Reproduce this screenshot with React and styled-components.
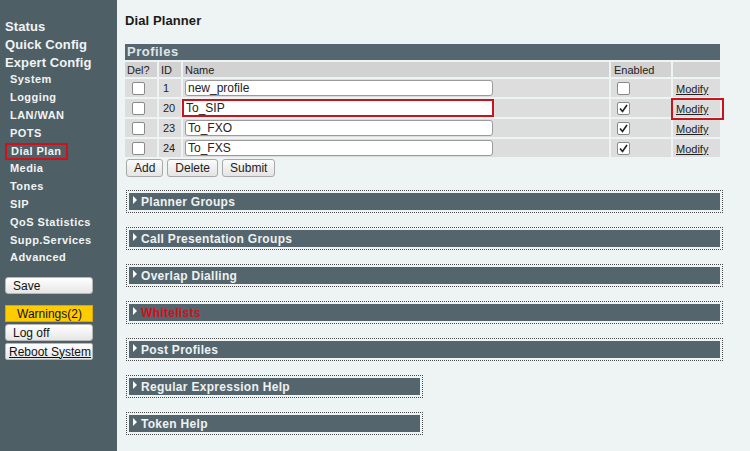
import React from "react";
import styled, { createGlobalStyle } from "styled-components";

const GlobalStyle = createGlobalStyle`
  body {
    margin: 0;
    background: #eef3f3;
    font-family: "Liberation Sans", Arial, sans-serif;
  }
`;

const Page = styled.div`
  display: flex;
  width: 750px;
  height: 451px;
  overflow: hidden;
`;

const Sidebar = styled.div`
  width: 117px;
  flex-shrink: 0;
  background: #4f5f66;
  padding: 18px 0 0 0;
  box-sizing: border-box;
`;

const NavList = styled.div`
  display: flex;
  flex-direction: column;
`;

const NavItem = styled.a`
  display: block;
  height: 17.8px;
  line-height: 17.8px;
  color: #f1f4f4;
  font-family: "Liberation Sans", Arial, sans-serif;
  font-weight: bold;
  font-size: ${({ $sub }) => ($sub ? "11px" : "13px")};
  letter-spacing: ${({ $sub }) => ($sub ? "0.45px" : "0.1px")};
  padding-left: ${({ $sub }) => ($sub ? "10px" : "5px")};
  text-decoration: none;
`;

const ActiveBox = styled.span`
  display: inline-block;
  margin-left: -5px;
  padding: 0 4px 0 4px;
  border: 2px solid #d0101a;
  line-height: 13px;
`;

const SideButtons = styled.div`
  display: flex;
  flex-direction: column;
  padding: 0 24px 0 5px;
  margin-top: 10px;
  gap: 2px;
`;

const SideButton = styled.button`
  height: 17px;
  padding: 0 0 0 ${({ $warn }) => ($warn ? "11px" : "7px")};
  text-align: left;
  font-family: "Liberation Sans", Arial, sans-serif;
  font-size: 12px;
  color: #111;
  background: ${({ $warn }) =>
    $warn ? "#ffcc00" : "linear-gradient(#ffffff, #e6e6e6)"};
  border: 1px solid ${({ $warn }) => ($warn ? "#d8a800" : "#b8b8b8")};
  border-radius: ${({ $warn }) => ($warn ? "0" : "3px")};
  margin-bottom: ${({ $gap }) => ($gap ? "9px" : "0")};
  text-decoration: ${({ $link }) => ($link ? "underline" : "none")};
  ${({ $link }) => $link && "padding-left: 3px; border-radius: 2px;"}
  white-space: nowrap;
  box-sizing: border-box;
  cursor: pointer;
`;

const Main = styled.div`
  flex: 1;
  padding: 12px 0 0 8px;
`;

const Title = styled.h1`
  margin: 0 0 15px 0;
  font-family: "Liberation Sans", Arial, sans-serif;
  font-size: 13px;
  font-weight: bold;
  color: #1a1a1a;
  letter-spacing: 0.1px;
  height: 17px;
  line-height: 17px;
`;

const Table = styled.table`
  border-collapse: separate;
  border-spacing: 2px;
  table-layout: fixed;
  margin: -2px 0 0 -2px;
  width: 599px;
  font-family: "Liberation Sans", Arial, sans-serif;
  font-size: 11px;
  line-height: 14px;
  color: #222;
`;

const Col = styled.col`
  width: ${({ $w }) => $w};
`;

const Caption = styled.th`
  background: #566670;
  color: #dfe6e6;
  font-family: "Liberation Sans", Arial, sans-serif;
  font-size: 13px;
  font-weight: bold;
  letter-spacing: 0.5px;
  text-align: left;
  height: 16px;
  padding: 0 0 0 2px;
  line-height: 16px;
`;

const HeadCell = styled.td`
  background: #d2d2d2;
  height: 15px;
  padding: 0 0 0 ${({ $pl }) => $pl || "2px"};
  font-weight: normal;
`;

const Cell = styled.td`
  background: #dddddd;
  height: 18px;
  padding: 0 0 0 ${({ $pl }) => $pl || "2px"};
  vertical-align: middle;
`;

const Box = styled.span`
  display: inline-block;
  width: 11px;
  height: 11px;
  border: 1px solid #8a8a8a;
  border-radius: 2px;
  background: #fff;
  vertical-align: middle;
  position: relative;
  margin-left: ${({ $ml }) => $ml || "5px"};
`;

const NameInput = styled.input`
  height: 16px;
  box-sizing: border-box;
  border: 1px solid ${({ $hl }) => ($hl ? "#c8141c" : "#9a9a9a")};
  box-shadow: ${({ $hl }) => ($hl ? "0 0 0 1px #c8141c" : "none")};
  border-radius: ${({ $hl }) => ($hl ? "0" : "3px")};
  margin-left: ${({ $hl }) => ($hl ? "0" : "2px")};
  width: ${({ $hl }) => ($hl ? "310px" : "308px")};
  padding: 0 2px;
  font-family: "Liberation Sans", Arial, sans-serif;
  font-size: 12px;
  color: #222;
  background: #fff;
  display: block;
`;

const ModifyLink = styled.a`
  color: #222;
  text-decoration: underline;
  font-size: 11px;
  display: inline-block;
  width: 44px;
  padding-left: 1px;
  line-height: 14px;
  vertical-align: middle;
  white-space: nowrap;
  outline: ${({ $hl }) => ($hl ? "2px solid #c8141c" : "none")};
  outline-offset: 2px;
`;

const ButtonRow = styled.div`
  display: flex;
  gap: 4px;
  margin: 0 0 13px 1px;
`;

const FormButton = styled.button`
  height: 18px;
  padding: 0 7px;
  font-family: "Liberation Sans", Arial, sans-serif;
  font-size: 12px;
  color: #222;
  background: linear-gradient(#fbfbfb, #e4e4e4);
  border: 1px solid #a8a8a8;
  border-radius: 3px;
  cursor: pointer;
`;

const Section = styled.div`
  width: ${({ $narrow }) => ($narrow ? "297px" : "597px")};
  border: 1px dotted #4a4a4a;
  padding: 2px;
  margin: 0 0 14px 1px;
  box-sizing: border-box;
`;

const SectionBar = styled.div`
  display: flex;
  align-items: center;
  gap: 4px;
  height: 17px;
  background: #55656d;
  padding-left: 4px;
  font-family: "Liberation Sans", Arial, sans-serif;
  font-weight: bold;
  font-size: 12px;
  letter-spacing: 0.3px;
  color: ${({ $red }) => ($red ? "#d0101a" : "#eef2f2")};
`;

const Arrow = styled.span`
  width: 0;
  height: 0;
  border-top: 4px solid transparent;
  border-bottom: 4px solid transparent;
  border-left: 4px solid #fff;
  margin-top: -3px;
`;

const Check = () => (
  <svg width="11" height="11" viewBox="0 0 11 11" style={{ position: "absolute", left: 0, top: 0 }}>
    <path d="M2 5.5 L4.5 8.5 L9 2" fill="none" stroke="#222" strokeWidth="1.6" />
  </svg>
);

const profiles = [
  { id: 1, name: "new_profile", enabled: false },
  { id: 20, name: "To_SIP", enabled: true, hl: true },
  { id: 23, name: "To_FXO", enabled: true },
  { id: 24, name: "To_FXS", enabled: true },
];

const sections = [
  { title: "Planner Groups" },
  { title: "Call Presentation Groups" },
  { title: "Overlap Dialling" },
  { title: "Whitelists", red: true },
  { title: "Post Profiles" },
  { title: "Regular Expression Help", narrow: true },
  { title: "Token Help", narrow: true },
];

const nav = [
  { label: "Status" },
  { label: "Quick Config" },
  { label: "Expert Config" },
  { label: "System", sub: true },
  { label: "Logging", sub: true },
  { label: "LAN/WAN", sub: true },
  { label: "POTS", sub: true },
  { label: "Dial Plan", sub: true, active: true },
  { label: "Media", sub: true },
  { label: "Tones", sub: true },
  { label: "SIP", sub: true },
  { label: "QoS Statistics", sub: true },
  { label: "Supp.Services", sub: true },
  { label: "Advanced", sub: true },
];

const App = () => {
  return (
    <Page>
      <GlobalStyle />
      <Sidebar>
        <NavList>
          {nav.map((item) => (
            <NavItem key={item.label} $sub={item.sub} href="#">
              {item.active ? <ActiveBox>{item.label}</ActiveBox> : item.label}
            </NavItem>
          ))}
        </NavList>
        <SideButtons>
          <SideButton $gap>Save</SideButton>
          <SideButton $warn>Warnings(2)</SideButton>
          <SideButton>Log off</SideButton>
          <SideButton $link>Reboot System</SideButton>
        </SideButtons>
      </Sidebar>
      <Main>
        <Title>Dial Planner</Title>
        <Table>
          <colgroup>
            <Col $w="32px" />
            <Col $w="22px" />
            <Col $w="426px" />
            <Col $w="60px" />
            <Col $w="47px" />
          </colgroup>
          <tbody>
            <tr>
              <Caption colSpan={5}>Profiles</Caption>
            </tr>
            <tr>
              <HeadCell>Del?</HeadCell>
              <HeadCell>ID</HeadCell>
              <HeadCell>Name</HeadCell>
              <HeadCell $pl="3px">Enabled</HeadCell>
              <HeadCell></HeadCell>
            </tr>
            {profiles.map((p) => (
              <tr key={p.id}>
                <Cell>
                  <Box />
                </Cell>
                <Cell $pl="4px">{p.id}</Cell>
                <Cell $pl="0">
                  <NameInput $hl={p.hl} defaultValue={p.name} />
                </Cell>
                <Cell>
                  <Box $ml="4px">{p.enabled && <Check />}</Box>
                </Cell>
                <Cell>
                  <ModifyLink href="#" $hl={p.hl}>
                    Modify
                  </ModifyLink>
                </Cell>
              </tr>
            ))}
          </tbody>
        </Table>
        <ButtonRow>
          <FormButton>Add</FormButton>
          <FormButton>Delete</FormButton>
          <FormButton>Submit</FormButton>
        </ButtonRow>
        {sections.map((s) => (
          <Section key={s.title} $narrow={s.narrow}>
            <SectionBar $red={s.red}>
              <Arrow />
              {s.title}
            </SectionBar>
          </Section>
        ))}
      </Main>
    </Page>
  );
};

export default App;
